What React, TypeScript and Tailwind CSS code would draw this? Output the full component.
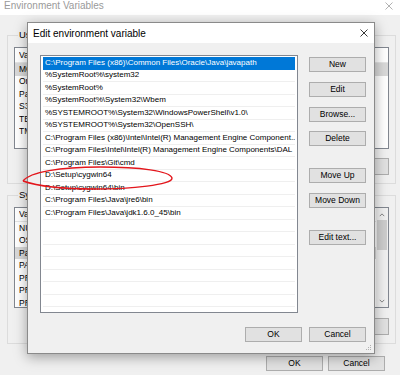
const pathRows = [
  "C:\\Program Files (x86)\\Common Files\\Oracle\\Java\\javapath",
  "%SystemRoot%\\system32",
  "%SystemRoot%",
  "%SystemRoot%\\System32\\Wbem",
  "%SYSTEMROOT%\\System32\\WindowsPowerShell\\v1.0\\",
  "%SYSTEMROOT%\\System32\\OpenSSH\\",
  "C:\\Program Files (x86)\\Intel\\Intel(R) Management Engine Component...",
  "C:\\Program Files\\Intel\\Intel(R) Management Engine Components\\DAL",
  "C:\\Program Files\\Git\\cmd",
  "D:\\Setup\\cygwin64",
  "D:\\Setup\\cygwin64\\bin",
  "C:\\Program Files\\Java\\jre6\\bin",
  "C:\\Program Files\\Java\\jdk1.6.0_45\\bin",
];

const userVars = ["MOZ_PLUGIN_PATH", "OneDrive", "Path", "S3_HOME", "TEMP", "TMP"];
const systemVars = [
  "NUMBER_OF_PROCESSORS",
  "OS",
  "Path",
  "PATHEXT",
  "PROCESSOR_ARCHITECTURE",
  "PROCESSOR_IDENTIFIER",
  "PROCESSOR_LEVEL",
];

const Btn = ({ label, className = "" }: { label: string; className?: string }) => (
  <div
    className={
      "flex items-center justify-center bg-[#e1e1e1] border border-[#adadad] text-[8.5px] leading-none text-black " +
      className
    }
  >
    {label}
  </div>
);

const CloseIcon = ({ color, className = "" }: { color: string; className?: string }) => (
  <svg viewBox="0 0 8 8" className={className}>
    <path d="M0.5 0.5 L7.5 7.5 M7.5 0.5 L0.5 7.5" stroke={color} strokeWidth="0.9" fill="none" />
  </svg>
);

// only the left edge of these lists peeks out from behind the dialog
const VarList = ({
  items,
  selected,
  height,
  scroll = false,
}: {
  items: string[];
  selected: number;
  height: string;
  scroll?: boolean;
}) => (
  <div className={"flex border border-[#828790] bg-white overflow-hidden " + height}>
    <div className="flex-1 flex flex-col">
      <div className="h-[15px] flex items-center border-b border-[#e5e5e5]">
        <span className="ml-[4px] w-[9px] overflow-hidden whitespace-nowrap text-[8.5px]">Variable</span>
      </div>
      {items.map((name, i) => (
        <div key={name} className={"h-[12.5px] flex items-center " + (i === selected ? "bg-[#d9d9d9]" : "")}>
          <span className="ml-[4px] w-[9px] overflow-hidden whitespace-nowrap text-[8.5px]">{name}</span>
        </div>
      ))}
    </div>
    {scroll && (
      <div className="w-[12px] bg-[#f0f0f0] flex flex-col items-center">
        <svg viewBox="0 0 8 8" className="w-[6px] h-[6px] mt-[4px]">
          <path d="M1 5.5 L4 2.5 L7 5.5" stroke="#606060" strokeWidth="1" fill="none" />
        </svg>
        <div className="w-[10px] h-[30px] bg-[#cdcdcd] mt-[2px]" />
        <div className="flex-1" />
        <svg viewBox="0 0 8 8" className="w-[6px] h-[6px] mb-[3px]">
          <path d="M1 2.5 L4 5.5 L7 2.5" stroke="#606060" strokeWidth="1" fill="none" />
        </svg>
      </div>
    )}
  </div>
);

const BgButtons = () => (
  <>
    <div className="w-[57px] h-[17px] bg-[#e1e1e1] border border-[#adadad]" />
    <div className="w-[57px] h-[17px] bg-[#e1e1e1] border border-[#adadad]" />
    <div className="w-[57px] h-[17px] bg-[#e1e1e1] border border-[#adadad]" />
  </>
);

const BackgroundWindow = () => (
  <div className="flex flex-col h-full">
    <div className="h-[15px] bg-white flex items-start justify-between pl-[4px] pr-[7px]">
      <span className="text-[10px] leading-[12px] text-[#9a9a9a]">Environment Variables</span>
      <CloseIcon color="#a8a8a8" className="w-[8px] h-[8px] mt-[2px]" />
    </div>
    <div className="pt-[14px] pl-[7px] pr-[4px] flex flex-col">
      <fieldset className="border border-[#dcdcdc] px-[6px] pb-[8px]">
        <legend className="ml-[4px] px-[1px] text-[9.5px] leading-[12px]">User</legend>
        <div className="mt-[6px]">
          <VarList items={userVars} selected={0} height="h-[102px]" />
        </div>
        <div className="mt-[9px] flex justify-end gap-[6px]">
          <BgButtons />
        </div>
      </fieldset>
      <fieldset className="mt-[5px] border border-[#dcdcdc] px-[6px] pb-[8px]">
        <legend className="ml-[4px] px-[1px] text-[9.5px] leading-[12px]">Syste</legend>
        <div className="mt-[6px]">
          <VarList items={systemVars} selected={2} height="h-[101px]" scroll />
        </div>
        <div className="mt-[10px] flex justify-end gap-[6px]">
          <BgButtons />
        </div>
      </fieldset>
      <div className="mt-[12px] mr-[11px] flex justify-end gap-[5px]">
        <Btn label="OK" className="w-[57px] h-[15px]" />
        <Btn label="Cancel" className="w-[57px] h-[15px]" />
      </div>
    </div>
  </div>
);

const EditDialog = () => {
  const rows = [...pathRows, ...Array(8).fill("")];
  return (
    <div className="absolute left-[27px] top-[22px] w-[348px] h-[332px] border border-[#8a8a8a] bg-[#f0f0f0] shadow-[0_3px_12px_rgba(0,0,0,0.35)] flex flex-col">
      <div className="h-[20px] bg-white flex items-center justify-between pl-[5px] pr-[6px]">
        <span className="text-[10px] text-black">Edit environment variable</span>
        <CloseIcon color="#222" className="w-[8px] h-[8px]" />
      </div>
      <div className="flex-1 flex flex-col pt-[12px] pl-[12px] pr-[8px]">
        <div className="flex">
          <div className="w-[258px] h-[258px] border border-[#828790] bg-white pt-[1px] px-[2px] overflow-hidden">
            {rows.map((r, i) => (
              <div
                key={i}
                className={
                  "h-[12.5px] flex items-center pl-[2px] text-[8px] whitespace-nowrap overflow-hidden border-b " +
                  (i === 0 ? "bg-[#0078d7] text-white border-[#0078d7]" : "text-black border-[#efefef]")
                }
              >
                {r}
              </div>
            ))}
          </div>
          <div className="ml-[11px] w-[57px] pt-[2px] flex flex-col">
            <Btn label="New" className="h-[15px]" />
            <Btn label="Edit" className="h-[15px] mt-[10px]" />
            <Btn label="Browse..." className="h-[15px] mt-[10px]" />
            <Btn label="Delete" className="h-[15px] mt-[9px]" />
            <Btn label="Move Up" className="h-[15px] mt-[22px]" />
            <Btn label="Move Down" className="h-[15px] mt-[10px]" />
            <Btn label="Edit text..." className="h-[15px] mt-[22px]" />
          </div>
        </div>
        <div className="mt-[14px] flex justify-end gap-[7px]">
          <Btn label="OK" className="w-[57px] h-[15px] border-[#0078d7]" />
          <Btn label="Cancel" className="w-[57px] h-[15px]" />
        </div>
      </div>
      <svg viewBox="0 0 6 6" className="absolute right-[2px] bottom-[2px] w-[6px] h-[6px]">
        <rect x="4" y="0" width="1" height="1" fill="#b0b0b0" />
        <rect x="2" y="2" width="1" height="1" fill="#b0b0b0" />
        <rect x="4" y="2" width="1" height="1" fill="#b0b0b0" />
        <rect x="0" y="4" width="1" height="1" fill="#b0b0b0" />
        <rect x="2" y="4" width="1" height="1" fill="#b0b0b0" />
        <rect x="4" y="4" width="1" height="1" fill="#b0b0b0" />
      </svg>
    </div>
  );
};

const RedCircle = () => (
  <svg className="absolute left-0 top-0 w-[400px] h-[375px] pointer-events-none" viewBox="0 0 400 375">
    <path
      d="M23 181 C30 172, 60 167, 100 167 C140 167, 170 171, 172 178 C173 185, 130 189, 95 189 C65 189, 40 187, 23 181"
      stroke="#e3161c"
      strokeWidth="1.4"
      fill="none"
    />
  </svg>
);

export default function App() {
  return (
    <div className="relative w-[400px] h-[375px] overflow-hidden bg-[#f0f0f0] font-['Liberation_Sans',Arial,sans-serif] text-black">
      <BackgroundWindow />
      <EditDialog />
      <RedCircle />
    </div>
  );
}
